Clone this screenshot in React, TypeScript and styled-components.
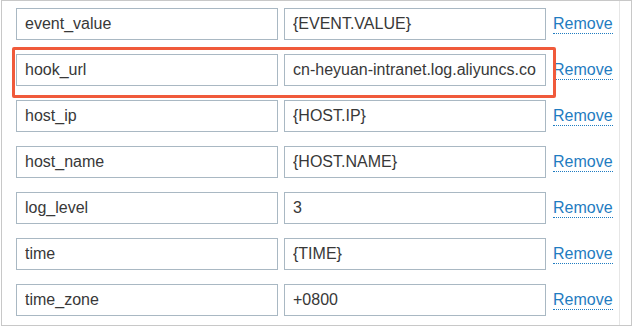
import styled, { createGlobalStyle } from "styled-components";

const GlobalStyle = createGlobalStyle`
    html, body {
        margin: 0;
        padding: 0;
        background: #ffffff;
        font-family: "Liberation Sans", Arial, sans-serif;
    }
`;

const Frame = styled.div`
    box-sizing: border-box;
    width: 631px;
    height: 326px;
    margin-left: 1px;
    border: 1px solid #c8c8c8;
    overflow: hidden;
`;

const Panel = styled.div`
    box-sizing: border-box;
    width: 618px;
    height: 100%;
    border-right: 1px solid #e6e6e6;
    padding: 7px 0 0 14px;
    display: flex;
    flex-direction: column;
    gap: 14px;
`;

const Row = styled.div`
    position: relative;
    display: flex;
    align-items: center;
    height: 32px;
`;

const Field = styled.input`
    box-sizing: border-box;
    width: 262px;
    height: 32px;
    margin: 0 6px 0 0;
    padding: 0 8px;
    border: 1px solid #a9b8c3;
    border-radius: 0;
    background: #ffffff;
    color: #383838;
    font-family: "Liberation Sans", Arial, sans-serif;
    font-size: 16px;
    outline: none;
`;

const RemoveLink = styled.a`
    margin-left: 1px;
    color: #1f7cc1;
    font-size: 16px;
    line-height: 19px;
    text-decoration: none;
    border-bottom: 1px dotted #1f7cc1;
    cursor: pointer;
`;

const Highlight = styled.div`
    position: absolute;
    left: -4px;
    top: -7px;
    width: 544px;
    height: 51px;
    box-sizing: border-box;
    border: 3px solid #f05a3b;
    border-radius: 2px;
    pointer-events: none;
`;

const rows = [
    { name: "event_value", value: "{EVENT.VALUE}" },
    { name: "hook_url", value: "cn-heyuan-intranet.log.aliyuncs.co", marked: true },
    { name: "host_ip", value: "{HOST.IP}" },
    { name: "host_name", value: "{HOST.NAME}" },
    { name: "log_level", value: "3" },
    { name: "time", value: "{TIME}" },
    { name: "time_zone", value: "+0800" },
];

export default function App() {
    return (
        <>
            <GlobalStyle />
            <Frame>
                <Panel>
                    {rows.map((row) => (
                        <Row key={row.name}>
                            <Field readOnly value={row.name} />
                            <Field readOnly value={row.value} />
                            <RemoveLink>Remove</RemoveLink>
                            {row.marked && <Highlight />}
                        </Row>
                    ))}
                </Panel>
            </Frame>
        </>
    );
}
